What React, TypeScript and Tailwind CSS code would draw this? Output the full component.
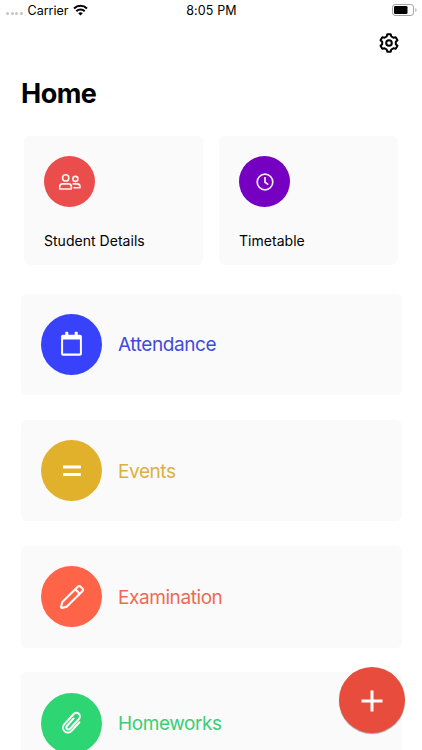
import type { ReactNode } from 'react'

function SignalDots() {
  return (
    <div className="flex gap-[1.5px] pt-[7px]">
      {[0, 1, 2, 3].map((dot) => (
        <span key={dot} className="size-[3px] rounded-full bg-[#c4c4c4]" />
      ))}
    </div>
  )
}

function WifiIcon() {
  return (
    <svg width="15" height="12" viewBox="0 0 15 12" fill="none" stroke="#000" strokeWidth="2.1">
      <path d="M1 4.4a9.4 9.4 0 0 1 13 0" />
      <path d="M3.3 7.2a6 6 0 0 1 8.4 0" />
      <path d="M7.5 11.6 5.2 9.3a3.3 3.3 0 0 1 4.6 0Z" fill="#000" stroke="none" />
    </svg>
  )
}

function BatteryIcon() {
  return (
    <svg width="25" height="12" viewBox="0 0 25 12" fill="none">
      <rect x="0.5" y="0.5" width="21" height="11" rx="2.7" stroke="#a3a3a3" />
      <rect x="2" y="2" width="13.5" height="8" rx="1.3" fill="#000" />
      <path d="M23.4 4v4c1.5-.6 1.5-3.4 0-4Z" fill="#a3a3a3" />
    </svg>
  )
}

function GearIcon() {
  return (
    <svg width="22" height="22" viewBox="-11 -11 22 22" fill="none" stroke="#000" strokeWidth="2" strokeLinejoin="round">
      <path d="M-1.7-8.7H1.7L2.3-6.5 4.4-5.3 6.7-5.8 8.5-2.8 6.8-1.2V1.2L8.5 2.8 6.7 5.8 4.4 5.3 2.3 6.5 1.7 8.7H-1.7L-2.3 6.5-4.4 5.3-6.7 5.8-8.5 2.8-6.8 1.2V-1.2L-8.5-2.8-6.7-5.8-4.4-5.3-2.3-6.5Z" />
      <circle r="2.8" />
    </svg>
  )
}

function StudentsIcon() {
  return (
    <svg width="24" height="18" viewBox="0 0 24 18" fill="none" stroke="#fff" strokeOpacity="0.92" strokeWidth="1.6" strokeLinejoin="round">
      <circle cx="7.7" cy="4.9" r="3.1" />
      <path d="M1.7 16v-2.3c0-1.7 1.2-2.8 2.9-2.8h5.9c1.7 0 2.9 1.1 2.9 2.8V16Z" />
      <circle cx="17.4" cy="5.9" r="2.5" />
      <path d="M14.6 10.9h4.5c1.7 0 2.9 1 2.9 2.6v1.3h-6.6" />
    </svg>
  )
}

function ClockIcon() {
  return (
    <svg width="18" height="18" viewBox="0 0 18 18" fill="none" stroke="#fff" strokeOpacity="0.92" strokeWidth="1.7">
      <circle cx="9" cy="9" r="7.8" />
      <path d="M9 4v5.3l3.3 2.3" />
    </svg>
  )
}

function CalendarIcon() {
  return (
    <svg width="21" height="26" viewBox="0.5 0 21 26" fill="#fff">
      <rect x="4.8" y="0.8" width="3" height="5" rx="0.6" />
      <rect x="14.2" y="0.8" width="3" height="5" rx="0.6" />
      <path
        fillRule="evenodd"
        d="M2.6 3.7h16.8c1.2 0 2 .8 2 2v17c0 1.2-.8 2-2 2H2.6c-1.2 0-2-.8-2-2v-17c0-1.2.8-2 2-2ZM2.6 8.4v14.1h16.8V8.4Z"
      />
    </svg>
  )
}

function EqualsIcon() {
  return (
    <svg width="18" height="12" viewBox="0 0 18 12" fill="#fff">
      <rect width="18" height="3" rx="0.4" y="0.5" />
      <rect width="18" height="3" rx="0.4" y="8" />
    </svg>
  )
}

function PencilIcon() {
  return (
    <svg width="26" height="26" viewBox="-13 -13 26 26" fill="none" stroke="#fff" strokeWidth="2.1" strokeLinejoin="round">
      <g transform="rotate(45)">
        <path d="M-3.2 10.4V-11.4a2 2 0 0 1 2-2h2.4a2 2 0 0 1 2 2V10.4L.6 15H-.6Z" />
        <path d="M-3.2-7.7h6.4" />
      </g>
    </svg>
  )
}

function PaperclipIcon() {
  return (
    <svg width="26" height="26" viewBox="-13 -13 26 26" fill="none" stroke="#fff" strokeWidth="2" strokeLinecap="round">
      <path
        transform="rotate(42)"
        d="M5-5.5V6.200a4.900 4.900 0 0 1-9.800 0V-7.800a3.600 3.600 0 0 1 7.200 0V5.600a2.100 2.100 0 0 1-4.200 0V-4.500"
      />
    </svg>
  )
}

const shortcuts = [
  { label: 'Student Details', color: 'bg-[#ea4d4b]', icon: <StudentsIcon /> },
  { label: 'Timetable', color: 'bg-[#7500c2]', icon: <ClockIcon /> },
]

const sections = [
  { label: 'Attendance', color: 'bg-[#3742fa]', text: 'text-[#404bdc]', icon: <CalendarIcon /> },
  { label: 'Events', color: 'bg-[#e1b12c]', text: 'text-[#dbb040]', icon: <EqualsIcon /> },
  { label: 'Examination', color: 'bg-[#ff6348]', text: 'text-[#ec6a55]', icon: <PencilIcon /> },
  { label: 'Homeworks', color: 'bg-[#2ed573]', text: 'text-[#3bce75]', icon: <PaperclipIcon /> },
]

function ShortcutCard({ label, color, icon }: { label: string; color: string; icon: ReactNode }) {
  return (
    <div className="h-[129px] w-[179px] rounded-md bg-[#fafafa] pt-5 pl-5">
      <div className={`flex size-[51px] items-center justify-center rounded-full ${color}`}>{icon}</div>
      <p className="mt-6 text-[14px] leading-5 tracking-[0.03px] text-black">{label}</p>
    </div>
  )
}

function SectionRow({ label, color, text, icon }: { label: string; color: string; text: string; icon: ReactNode }) {
  return (
    <div className="flex h-[101.5px] shrink-0 items-center rounded-md bg-[#fafafa] pl-5">
      <div className={`flex size-[61px] items-center justify-center rounded-full ${color}`}>{icon}</div>
      <p className={`ml-4 pt-[2px] text-[19px] leading-6 tracking-[-0.42px] ${text}`}>{label}</p>
    </div>
  )
}

export default function App() {
  return (
    <div className="relative flex h-[750px] w-[422px] flex-col overflow-hidden bg-white font-['Inter','Liberation_Sans',sans-serif]">
      {/* Status bar */}
      <div className="grid h-5 shrink-0 grid-cols-3 items-center pr-[5px] pl-[6px] text-[12.5px] text-black">
        <div className="flex items-center gap-[5px]">
          <SignalDots />
          <span className="pt-0.5">Carrier</span>
          <WifiIcon />
        </div>
        <span className="pt-0.5 text-center tracking-[0.12px]">8:05 PM</span>
        <div className="flex justify-end">
          <BatteryIcon />
        </div>
      </div>

      <div className="flex h-[46px] shrink-0 items-center justify-end pr-[22.5px]">
        <GearIcon />
      </div>

      <h1 className="ml-[21px] h-[70px] shrink-0 pt-[10px] text-[27px] leading-9 font-bold tracking-[-0.5px] text-black">Home</h1>

      {/* Shortcuts */}
      <div className="flex shrink-0 gap-4 pl-6">
        {shortcuts.map((item) => (
          <ShortcutCard key={item.label} {...item} />
        ))}
      </div>

      {/* Sections */}
      <div className="mt-[28.5px] flex flex-col gap-[24.8px] pr-5 pl-[21px]">
        {sections.map((item) => (
          <SectionRow key={item.label} {...item} />
        ))}
      </div>

      <button
        aria-label="Add"
        className="absolute top-[667px] left-[339px] flex size-[66px] items-center justify-center rounded-full bg-[#e74c3c] shadow-[0_1px_1px_rgba(0,0,0,0.35)]"
      >
        <svg className="mt-px" width="22" height="22" viewBox="0 0 22 22" stroke="#fff" strokeWidth="3">
          <path d="M11 0.5v21M0.5 11h21" />
        </svg>
      </button>
    </div>
  )
}
